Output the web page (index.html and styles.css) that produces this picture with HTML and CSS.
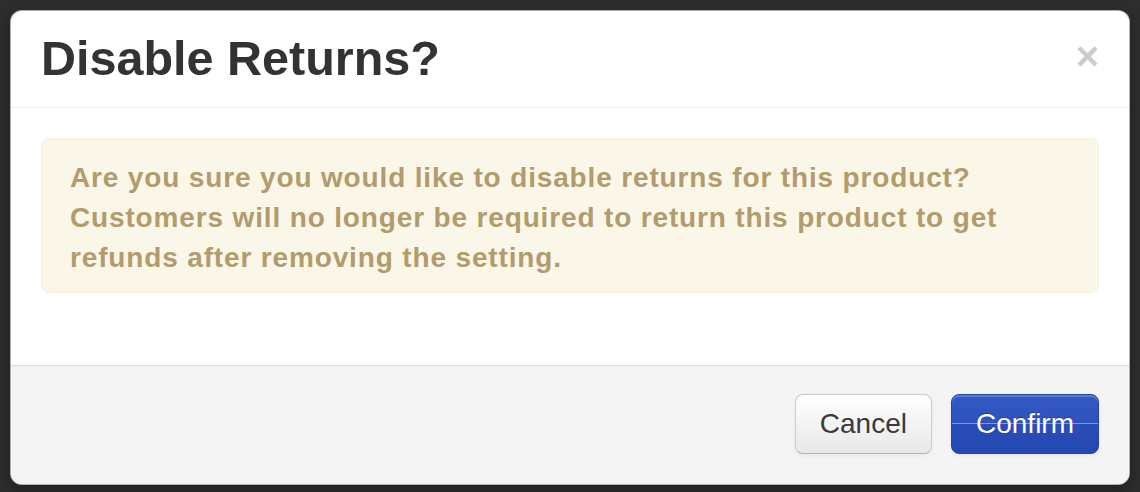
FILE: index.html
```html
<!DOCTYPE html>
<html lang="en">
<head>
<meta charset="utf-8">
<title>Disable Returns?</title>
<link rel="stylesheet" href="styles.css">
</head>
<body>
<div class="modal">
  <div class="modal-header">
    <h3 class="modal-title">Disable Returns?</h3>
    <button class="close" type="button">&times;</button>
  </div>
  <div class="modal-body">
    <div class="alert">Are you sure you would like to disable returns for this product? Customers will no longer be required to return this product to get refunds after removing the setting.</div>
  </div>
  <div class="modal-footer">
    <button class="btn" type="button">Cancel</button>
    <button class="btn btn-primary" type="button">Confirm</button>
  </div>
</div>
</body>
</html>
```
FILE: styles.css
```css
html, body {
  margin: 0;
  height: 100%;
}
body {
  background: #2d2d2d;
  padding: 10px;
  box-sizing: border-box;
  font-family: "Liberation Sans", Arial, Helvetica, sans-serif;
  color: #333;
}
.modal {
  width: 1120px;
  box-sizing: border-box;
  background: #fff;
  border: 1px solid rgba(0, 0, 0, 0.3);
  border-radius: 12px;
  box-shadow: 0 6px 14px rgba(0, 0, 0, 0.3);
  overflow: hidden;
}
.modal-header {
  display: flex;
  align-items: center;
  justify-content: space-between;
  padding: 17px 30px 19px;
  border-bottom: 1px solid #eee;
}
.modal-title {
  margin: 0;
  font-size: 48.5px;
  line-height: 60px;
  font-weight: bold;
  color: #333;
}
.close {
  border: 0;
  background: none;
  padding: 0;
  margin-top: -4px;
  font-family: "Liberation Sans", Arial, sans-serif;
  font-size: 40px;
  line-height: 40px;
  font-weight: bold;
  color: #000;
  opacity: 0.2;
  cursor: pointer;
}
.modal-body {
  padding: 30px 30px 32px;
}
.alert {
  padding: 19px 70px 14px 28px;
  margin-bottom: 40px;
  background: #fbf7e8;
  border: 1px solid #f8f0da;
  border-radius: 8px;
  color: #b39b6c;
  font-size: 28px;
  line-height: 40px;
  letter-spacing: 0.85px;
  font-weight: bold;
}
.modal-footer {
  display: flex;
  justify-content: flex-end;
  gap: 19px;
  padding: 28px 30px 30px;
  background: #f4f4f4;
  border-top: 1px solid #ddd;
  box-shadow: inset 0 1px 0 #eee;
}
.btn {
  font-family: "Liberation Sans", Arial, sans-serif;
  font-size: 28px;
  line-height: 40px;
  padding: 9px 24px;
  color: #3a3a3a;
  background: linear-gradient(#fff, #e8e8e8);
  border: 1px solid #ccc;
  border-bottom-color: #b3b3b3;
  border-radius: 8px;
  box-shadow: inset 0 2px 0 rgba(255, 255, 255, 0.2), 0 2px 4px rgba(0, 0, 0, 0.05);
  cursor: pointer;
}
.btn-primary {
  color: #fff;
  border-color: #2343a8;
  background: linear-gradient(#3459c4 0%, #2d52bd 48%, #7f98d8 48%, #7f98d8 50.5%, #2a4db8 50.5%, #2448b3 100%);
  text-shadow: 0 -1px 0 rgba(0, 0, 0, 0.25);
}
```
